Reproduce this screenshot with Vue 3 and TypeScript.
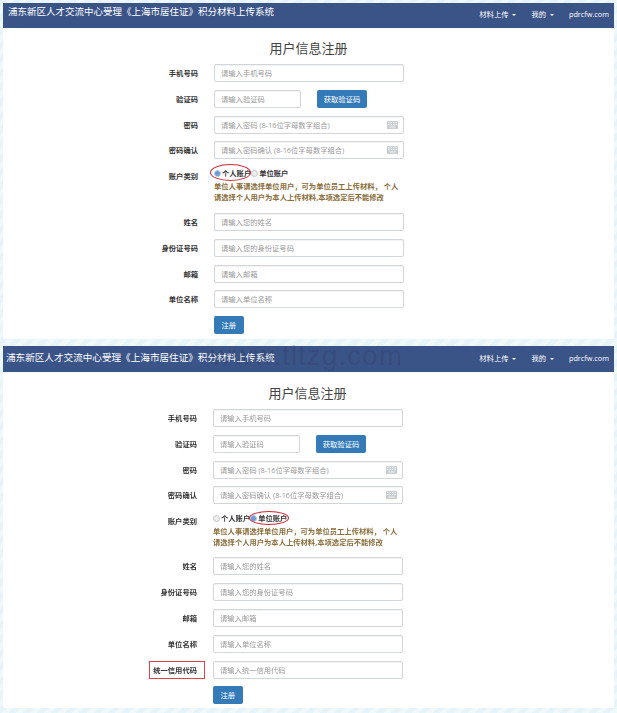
<template>
  <div class="page">
    <section v-for="panel in panels" :key="panel.id" class="panel" :class="`panel-${panel.id}`">
      <nav class="navbar">
        <span class="brand">浦东新区人才交流中心受理《上海市居住证》积分材料上传系统</span>
        <div class="nav-links">
          <span class="nav-link">材料上传 <i class="caret"></i></span>
          <span class="nav-link">我的 <i class="caret"></i></span>
          <span class="nav-link">pdrcfw.com</span>
        </div>
      </nav>
      <span v-if="panel.id === 2" class="watermark">www.tltzg.com</span>
      <h2 class="title">用户信息注册</h2>
      <form class="form" @submit.prevent>
        <div class="row">
          <label class="label">手机号码</label>
          <div class="field"><input class="input" placeholder="请输入手机号码" /></div>
        </div>
        <div class="row">
          <label class="label">验证码</label>
          <div class="field code-field">
            <input class="input code-input" placeholder="请输入验证码" />
            <button class="btn code-btn" type="button">获取验证码</button>
          </div>
        </div>
        <div v-for="pw in passwords" :key="pw.label" class="row">
          <label class="label">{{ pw.label }}</label>
          <div class="field">
            <input class="input" :placeholder="pw.placeholder" />
            <svg class="kbd" viewBox="0 0 11 8" width="11" height="8">
              <rect width="11" height="8" fill="#c9cdd0" />
              <path d="M1 1.5h1.5M3.5 1.5h1.5M6 1.5h1.5M8.5 1.5h1.5M1 3.5h1.5M3.5 3.5h1.5M6 3.5h1.5M8.5 3.5h1.5M2.5 6h6" stroke="#f1f2f3" stroke-width="1" fill="none" />
            </svg>
          </div>
        </div>
        <div class="row type-row">
          <label class="label">账户类别</label>
          <div class="field">
            <div class="radios">
              <span class="radio" :class="{ on: panel.id === 1 }"></span><b>个人账户</b>
              <span class="radio" :class="{ on: panel.id === 2 }"></span><b>单位账户</b>
              <span class="ellipse" :class="`ellipse-${panel.id}`"></span>
            </div>
            <p class="note">单位人事请选择单位用户，可为单位员工上传材料， 个人请选择个人用户为本人上传材料,本项选定后不能修改</p>
          </div>
        </div>
        <div v-for="item in infoFields" :key="item.label" class="row">
          <label class="label">{{ item.label }}</label>
          <div class="field"><input class="input" :placeholder="item.placeholder" /></div>
        </div>
        <div v-if="panel.id === 2" class="row">
          <label class="label"><span class="marked">统一信用代码</span></label>
          <div class="field"><input class="input" placeholder="请输入统一信用代码" /></div>
        </div>
        <div class="row submit-row">
          <button class="btn" type="submit">注册</button>
        </div>
      </form>
    </section>
  </div>
</template>

<script setup lang="ts">
const panels = [{ id: 1 }, { id: 2 }]

const passwords = [
  { label: '密码', placeholder: '请输入密码 (8-16位字母数字组合)' },
  { label: '密码确认', placeholder: '请输入密码确认 (8-16位字母数字组合)' }
]

const infoFields = [
  { label: '姓名', placeholder: '请输入您的姓名' },
  { label: '身份证号码', placeholder: '请输入您的身份证号码' },
  { label: '邮箱', placeholder: '请输入邮箱' },
  { label: '单位名称', placeholder: '请输入单位名称' }
]
</script>

<style>
html,
body {
  margin: 0;
  height: 713px;
  overflow: hidden;
  background: repeating-linear-gradient(135deg, #e6f3f8 0, #e6f3f8 5px, #eff8fb 5px, #eff8fb 10px);
}
</style>

<style scoped>
.page {
  font-family: "Open Sans", "Noto Sans CJK SC", sans-serif;
  padding-top: 3px;
  filter: blur(0.35px);
}

.panel {
  position: relative;
  background: #fff;
  margin: 0 3px;
  height: 336px;
}

.panel-2 {
  margin-top: 7px;
  height: 362px;
}

.navbar {
  display: flex;
  justify-content: space-between;
  align-items: flex-start;
  height: 25px;
  background: #3b5488;
  color: #fff;
  padding: 2px 5px 0;
  box-sizing: border-box;
}

.panel-2 .navbar {
  height: 26px;
  padding: 5px 5px 0 3px;
}

.brand {
  font-size: 9.5px;
  line-height: 14px;
}

.panel-2 .brand {
  font-size: 9.6px;
}

.nav-links {
  display: flex;
  gap: 15px;
  padding-top: 3px;
}

.panel-2 .nav-links {
  padding-top: 1px;
}

.nav-link {
  font-size: 7.3px;
  line-height: 12px;
}

.caret {
  display: inline-block;
  border-top: 2px solid #fff;
  border-left: 2px solid transparent;
  border-right: 2px solid transparent;
  vertical-align: middle;
  margin-left: 2px;
}

.watermark {
  position: absolute;
  right: 211px;
  top: -4px;
  font-size: 28px;
  line-height: 28px;
  letter-spacing: 1px;
  color: rgba(40, 40, 60, 0.16);
  font-family: "Liberation Sans", sans-serif;
  white-space: nowrap;
}

.title {
  margin: 12px 0 8px;
  text-align: center;
  font-size: 13px;
  line-height: 16px;
  font-weight: 400;
  color: #444;
}

.panel-2 .title {
  margin: 13px 2px 8px 0;
}

.panel-2 .form {
  margin-left: -1px;
}

.row {
  display: flex;
  align-items: flex-start;
  margin-bottom: 7.8px;
}

.label {
  position: relative;
  width: 195px;
  text-align: right;
  font-size: 7.3px;
  line-height: 18px;
  font-weight: 700;
  color: #333;
}

.marked {
  display: inline-block;
}

.marked::after {
  content: "";
  position: absolute;
  left: 147px;
  right: -8px;
  top: 0;
  bottom: 0;
  border: 1.5px solid #d9434d;
}

.field {
  position: relative;
  width: 190px;
  margin-left: 16px;
}

.input {
  display: block;
  width: 100%;
  height: 18px;
  box-sizing: border-box;
  border: 1px solid #d2d6d8;
  border-radius: 2px;
  box-shadow: inset 0 1px 1px rgba(0, 0, 0, 0.05);
  padding: 0 6px;
  font: inherit;
  font-size: 7.3px;
  background: #fff;
}

.input::placeholder {
  color: #999;
}

.code-field {
  display: flex;
  gap: 16px;
}

.code-input {
  width: 87px;
}

.btn {
  display: block;
  height: 18px;
  padding: 0 7.5px;
  border: 0;
  border-radius: 2px;
  background: #337ab7;
  color: #fff;
  font: inherit;
  font-size: 7.3px;
}

.code-btn {
  width: 50px;
  padding: 0;
}

.kbd {
  position: absolute;
  right: 6px;
  top: 5px;
}

.radios {
  position: relative;
  display: flex;
  align-items: center;
  font-size: 7.3px;
  line-height: 12px;
  color: #333;
}

.radio {
  width: 5px;
  height: 5px;
  margin-right: 1px;
  border: 1px solid #c4c4c4;
  border-radius: 50%;
  background: #eee;
}

.radio.on {
  background: #6f9bd2;
  border-color: #b6cde8;
}

.ellipse {
  position: absolute;
  border: 1px solid #cf2a36;
  border-radius: 50%;
}

.ellipse-1 {
  left: -4px;
  top: -3px;
  width: 39px;
  height: 15px;
}

.ellipse-2 {
  left: 36px;
  top: -1px;
  width: 38px;
  height: 12px;
}

.note {
  margin: 2px 0 0;
  font-size: 7.3px;
  line-height: 11px;
  font-weight: 700;
  color: #8a6d3b;
}

.type-row {
  margin-bottom: 9.8px;
}

.panel-2 .type-row {
  margin-bottom: 9.3px;
}

.submit-row {
  padding-left: 211px;
}
</style>
